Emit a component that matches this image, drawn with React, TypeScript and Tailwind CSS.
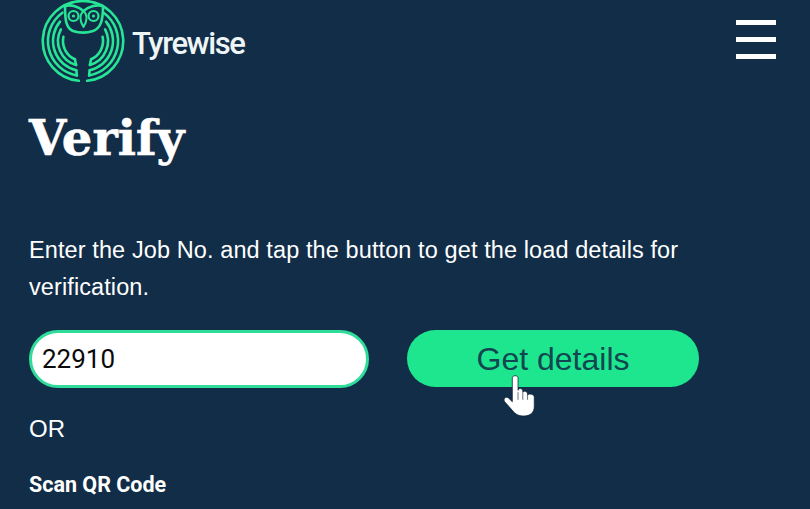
function polar(r: number, deg: number) {
  const a = (deg * Math.PI) / 180;
  return `${(48 + r * Math.sin(a)).toFixed(1)} ${(43 - r * Math.cos(a)).toFixed(1)}`;
}
function arc(r: number, from: number, to: number) {
  return `M${polar(r, from)} A${r} ${r} 0 ${to - from > 180 ? 1 : 0} 1 ${polar(r, to)}`;
}

function Logo() {
  const wings: [number, number, number][] = [
    [35, 36, 170],
    [30, 50, 167],
    [25, 62, 164],
    [20, 78, 156],
  ];
  return (
    <svg viewBox="0 0 100 90" className="h-[90px] w-[100px] shrink-0" fill="none" stroke="#27e596" strokeWidth="2.6" strokeLinecap="round" strokeLinejoin="round">
      <path d={arc(40, 0, 174)} />
      <path d={arc(40, 186, 360)} />
      <path d="M30 8 C36 6 44 9 48.5 13 C53 9 61 6 68 8 C68 22 66 30 58 33 C52 35 44 35 38 33 C31 30 30 22 30 8Z" />
      <path d="M48.5 13 C44 17 45 24 48.5 29 C52 24 53 17 48.5 13Z" strokeWidth="2" />
      <circle cx="38.5" cy="18" r="5" strokeWidth="2.2" />
      <circle cx="38.5" cy="18" r="1.6" fill="#27e596" stroke="none" />
      <circle cx="58.5" cy="18" r="5" strokeWidth="2.2" />
      <circle cx="58.5" cy="18" r="1.6" fill="#27e596" stroke="none" />
      {wings.map(([r, a, b]) => (
        <path key={`r${r}`} d={arc(r, a, b)} />
      ))}
      {wings.map(([r, a, b]) => (
        <path key={`l${r}`} d={arc(r, 360 - b, 360 - a)} />
      ))}
      <path d={`M${polar(35, 170)} L${polar(30, 167)}`} />
      <path d={`M${polar(25, 164)} L${polar(20, 156)}`} />
      <path d={`M${polar(35, 190)} L${polar(30, 193)}`} />
      <path d={`M${polar(25, 196)} L${polar(20, 204)}`} />
    </svg>
  );
}

function HandCursor() {
  return (
    <svg
      viewBox="0 0 34 44"
      className="absolute left-[95px] top-[45px] h-[42px] w-[34px]"
      fill="#ffffff"
      stroke="#10243a"
      strokeWidth="0.8"
      strokeLinejoin="round"
    >
      <path d="M10 3 C10 0 16 0 16 3 L16 16 C17 13 21 14 21 17 L21 18 C22 16 26 17 26 20 L26 21 C27 19 33 20 33 23 L33 33 C33 39 29 43 22 43 C16 43 13 41 10 37 L2 28 C0 25 3 22 6 24 L10 28Z" />
      <path d="M16 18 L16 26 M21 18 L21 26 M26 21 L26 26" stroke="#3a4654" fill="none" />
    </svg>
  );
}

export default function App() {
  return (
    <div className="h-[509px] w-[810px] overflow-hidden bg-[#122d47] font-['Liberation_Sans',sans-serif] text-white">
      <header className="flex h-[86px] items-center justify-between pl-[35px] pr-[34px]">
        <div className="flex items-center">
          <Logo />
          <span className="ml-[-3px] font-['Roboto',sans-serif] text-[31px] font-medium leading-none tracking-[-1.4px] text-[#eef5f7]">Tyrewise</span>
        </div>
        <div className="mb-[8px] flex w-[40px] flex-col gap-[12px]">
          <div className="h-[5px] bg-white" />
          <div className="h-[5px] bg-white" />
          <div className="h-[5px] bg-white" />
        </div>
      </header>
      <main className="px-[29px]">
        <h1 className="mt-[22px] font-['DejaVu_Serif',serif] text-[48px] font-bold leading-[60px] [-webkit-text-stroke:0.6px_white]">Verify</h1>
        <p className="mt-[64px] w-[700px] text-[23.5px] leading-[37px] tracking-[0.1px]">
          Enter the Job No. and tap the button to get the load details for verification.
        </p>
        <div className="mt-[24px] flex items-start gap-[38px]">
          <input
            readOnly
            value="22910"
            className="h-[58px] w-[340px] rounded-[29px] border-[3px] border-[#2fdc9a] bg-white pl-[10px] font-['Roboto',sans-serif] text-[26px] text-[#0a0a0a] outline-none"
          />
          <div className="relative">
            <button className="h-[57px] w-[292px] rounded-[29px] bg-[#1ee68f] text-[32px] leading-none text-[#124650]">Get details</button>
            <HandCursor />
          </div>
        </div>
        <p className="mt-[26px] text-[24px] leading-[30px]">OR</p>
        <p className="mt-[27px] font-['Roboto',sans-serif] text-[21.5px] font-bold leading-[28px]">Scan QR Code</p>
      </main>
    </div>
  );
}
